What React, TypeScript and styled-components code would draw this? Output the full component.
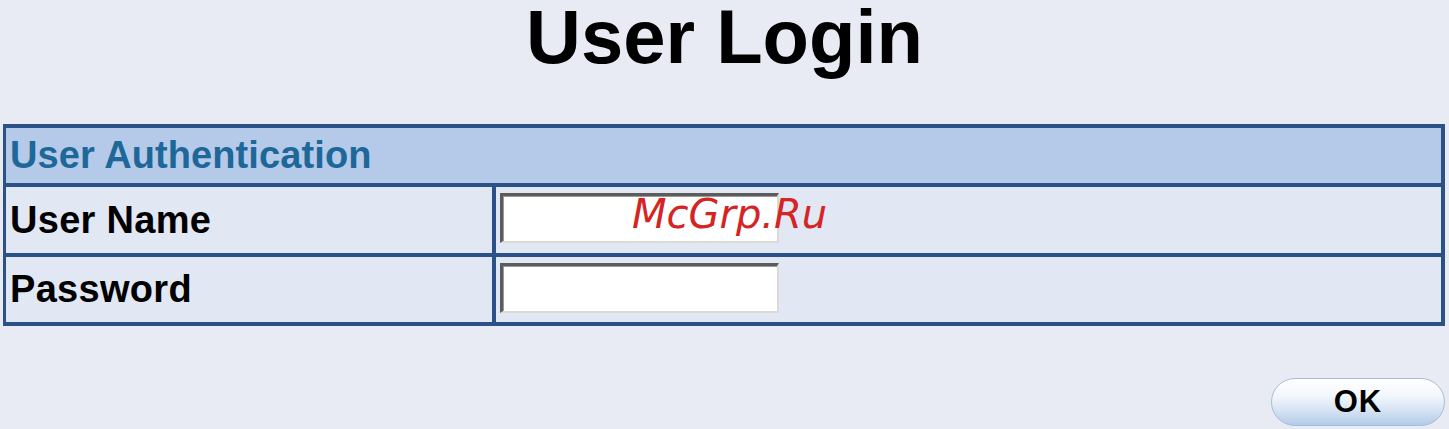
import styled, { createGlobalStyle } from "styled-components";

const GlobalStyle = createGlobalStyle`
  html, body {
    margin: 0;
    padding: 0;
    background: #e8ebf4;
    font-family: "Liberation Sans", Arial, Helvetica, sans-serif;
  }
`;

const Page = styled.div`
  position: relative;
  width: 1449px;
  height: 429px;
  overflow: hidden;
  background: #e8ebf4;
  display: flex;
  flex-direction: column;
`;

const Title = styled.h1`
  margin: 0;
  height: 124px;
  font-size: 76px;
  line-height: 74px;
  font-weight: 700;
  color: #000;
  text-align: center;
  box-sizing: border-box;
`;

const Panel = styled.div`
  margin: 0 4px 0 3px;
  border: 4px solid #2c5189;
  border-left-width: 3px;
  display: flex;
  flex-direction: column;
`;

const HeaderRow = styled.div`
  height: 55px;
  background: #b5c9e9;
  display: flex;
  align-items: center;
  padding-left: 4px;
  font-size: 38px;
  font-weight: 700;
  letter-spacing: 0.1px;
  color: #1d6898;
`;

const Row = styled.div<{ $height: number }>`
  height: ${(p) => p.$height}px;
  border-top: 4px solid #2c5189;
  background: #e1e8f3;
  display: grid;
  grid-template-columns: 490px 1fr;
`;

const Label = styled.div`
  border-right: 4px solid #2c5189;
  display: flex;
  align-items: center;
  padding-left: 4px;
  font-size: 38px;
  font-weight: 700;
  letter-spacing: 0.3px;
  color: #000;
`;

const Field = styled.div`
  padding: 6px 0 0 4px;
`;

const TextInput = styled.input`
  box-sizing: border-box;
  width: 279px;
  height: 50px;
  margin: 0;
  padding: 0 6px;
  background: #fff;
  border-style: solid;
  border-width: 3px 2px 2px 3px;
  border-color: #5c5c5c #dcdad4 #dcdad4 #5c5c5c;
  box-shadow: inset 1px 1px 0 #9a9a9a;
  outline: none;
  font-size: 24px;
  font-family: "Liberation Sans", Arial, sans-serif;
`;

const Footer = styled.div`
  display: flex;
  justify-content: flex-end;
  padding: 52px 4px 0 0;
`;

const OkButton = styled.button`
  width: 174px;
  height: 48px;
  border-radius: 24px;
  border: 1px solid #a9bdd6;
  background: linear-gradient(180deg, #ffffff 0%, #f4f8fd 35%, #d4e2f3 70%, #b3cbe9 100%);
  font-family: "Liberation Sans", Arial, sans-serif;
  font-size: 31px;
  font-weight: 700;
  letter-spacing: 1px;
  color: #000;
  cursor: pointer;
  padding: 0;
`;

const Watermark = styled.div`
  position: absolute;
  left: 632px;
  top: 191px;
  font-family: "DejaVu Sans", sans-serif;
  font-style: italic;
  font-size: 40px;
  color: #d42424;
  pointer-events: none;
  white-space: nowrap;
`;

export default function App() {
  return (
    <>
      <GlobalStyle />
      <Page>
        <Title>User Login</Title>
        <Panel>
          <HeaderRow>User Authentication</HeaderRow>
          <Row $height={66}>
            <Label>User Name</Label>
            <Field>
              <TextInput type="text" />
            </Field>
          </Row>
          <Row $height={65}>
            <Label>Password</Label>
            <Field>
              <TextInput type="password" />
            </Field>
          </Row>
        </Panel>
        <Footer>
          <OkButton>OK</OkButton>
        </Footer>
        <Watermark>McGrp.Ru</Watermark>
      </Page>
    </>
  );
}
